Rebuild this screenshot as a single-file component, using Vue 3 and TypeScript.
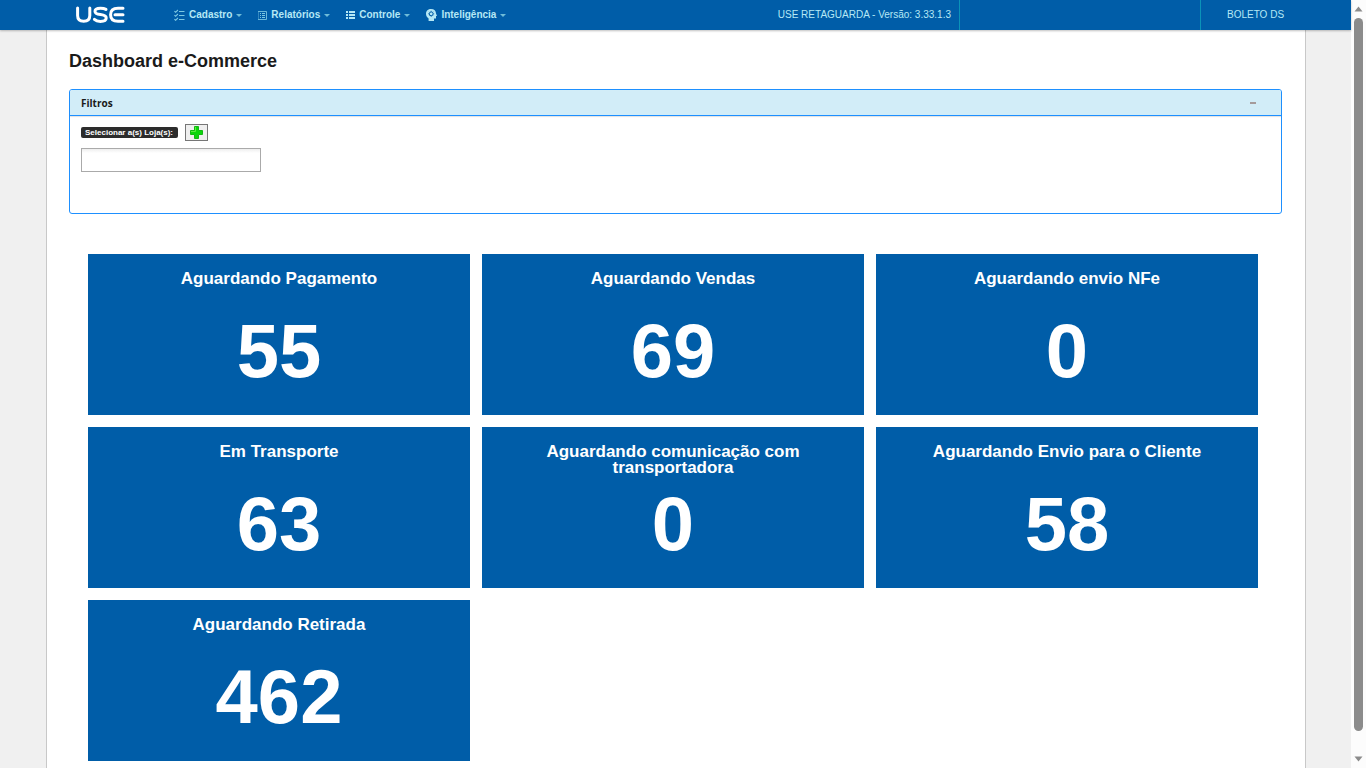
<script setup lang="ts">
import { ref } from 'vue'

interface MenuEntry {
  label: string
  icon: 'tasks' | 'report' | 'list' | 'mind'
}

interface StatusCard {
  title: string
  total: number
}

const menu: MenuEntry[] = [
  { label: 'Cadastro', icon: 'tasks' },
  { label: 'Relatórios', icon: 'report' },
  { label: 'Controle', icon: 'list' },
  { label: 'Inteligência', icon: 'mind' },
]

const cards: StatusCard[] = [
  { title: 'Aguardando Pagamento', total: 55 },
  { title: 'Aguardando Vendas', total: 69 },
  { title: 'Aguardando envio NFe', total: 0 },
  { title: 'Em Transporte', total: 63 },
  { title: 'Aguardando comunicação com transportadora', total: 0 },
  { title: 'Aguardando Envio para o Cliente', total: 58 },
  { title: 'Aguardando Retirada', total: 462 },
]

const store = ref('')
const open = ref(true)
</script>

<template>
  <div class="window">
    <div class="page">
      <header class="topbar">
        <a class="logo" href="#" aria-label="USE">
          <svg width="50" height="18" viewBox="0 0 50 18" fill="none" stroke="#fff" stroke-width="3" stroke-linecap="round">
            <path d="M1.6 2V9.5Q1.6 15.2 7.7 15.2Q13.8 15.2 13.8 9.5V2" />
            <path d="M30 3.4Q28 2.2 24.4 2.2Q19 2.2 19 5.2Q19 7.9 24.4 8.6Q30.2 9.3 30.2 12Q30.2 15.4 24.4 15.4Q20.4 15.4 18.4 13.4" />
            <path d="M47 2.2H42Q34.6 2.2 34.6 8.7Q34.6 15.2 42 15.2H47M39 8.7H47" />
          </svg>
        </a>
        <nav class="menu">
          <button v-for="entry in menu" :key="entry.label" type="button" class="menu-item" :class="entry.icon">
            <svg v-if="entry.icon === 'tasks'" class="icon" width="11" height="12" viewBox="0 0 11 12" fill="none" stroke="currentColor">
              <path d="M.4 2.2L1.6 3.3L3.9 1M.4 6.2L1.6 7.3L3.9 5M.4 10.2L1.6 11.3L3.9 9" stroke-width="1.1" />
              <path d="M5 2.5H10.5M5 6.5H10.5M5 10.5H10.5" />
            </svg>
            <svg v-else-if="entry.icon === 'report'" class="icon" width="9" height="9" viewBox="0 0 9 9" fill="none" stroke="currentColor">
              <path d="M.5 1V8" opacity=".4" />
              <path d="M0 .5H8.5V8.5H0" opacity=".85" />
              <path d="M2 2.5H3M4 2.5H7M2 4.5H3M4 4.5H7M2 6.5H3M4 6.5H7" />
            </svg>
            <svg v-else-if="entry.icon === 'list'" class="icon" width="9" height="8" viewBox="0 0 9 8" fill="currentColor">
              <path d="M0 0H2V2H0ZM3 0H9V2H3ZM0 3H2V5H0ZM3 3H9V5H3ZM0 6H2V8H0ZM3 6H9V8H3Z" />
            </svg>
            <svg v-else class="icon" width="11" height="12" viewBox="0 0 11 12">
              <path fill="currentColor" d="M5 0C8.2 0 10 2 10 4.6L11 7H10V9.5H8V12H2.6V9.5C1 8.4 0 6.8 0 4.8C0 2 2.2 0 5 0Z" />
              <circle cx="5.2" cy="4.8" r="1.9" fill="none" stroke="#005da8" stroke-width="1" />
              <path fill="none" stroke="#005da8" stroke-width=".8" d="M5.2 1.8V2.7M5.2 6.9V7.8M2.2 4.8H3.1M7.3 4.8H8.2M3.2 2.8L3.7 3.3M7.2 2.8L6.7 3.3M3.2 6.8L3.7 6.3M7.2 6.8L6.7 6.3" />
            </svg>
            <span>{{ entry.label }}</span>
            <svg class="caret" width="6" height="3" viewBox="0 0 6 3" fill="currentColor"><path d="M0 0H6L3 3Z" /></svg>
          </button>
        </nav>
        <div class="version">USE RETAGUARDA - Versão: 3.33.1.3</div>
        <div class="blank"></div>
        <div class="user">BOLETO DS</div>
      </header>

      <main class="content">
        <h1>Dashboard e-Commerce</h1>

        <section class="panel">
          <header class="panel-head">
            <h2>Filtros</h2>
            <button type="button" class="collapse" aria-label="Recolher filtros" @click="open = !open">
              <svg width="6" height="2" viewBox="0 0 6 2"><path d="M0 0H6V2H0Z" fill="#a59b9b" /></svg>
            </button>
          </header>
          <div v-if="open" class="panel-body">
            <div class="field-head">
              <label for="store">Selecionar a(s) Loja(s):</label>
              <button type="button" class="add" aria-label="Adicionar loja">
                <svg width="13" height="13" viewBox="0 0 13 13">
                  <path d="M4.5 .5H8.5V4.5H12.5V8.5H8.5V12.5H4.5V8.5H.5V4.5H4.5Z" fill="#0bd60b" stroke="#12b812" />
                  <path d="M5.5 1V5.5H1" fill="none" stroke="#5cf03c" />
                </svg>
              </button>
            </div>
            <input id="store" v-model="store" type="text" />
          </div>
        </section>

        <section class="cards">
          <article v-for="card in cards" :key="card.title" class="card">
            <h3>{{ card.title }}</h3>
            <strong>{{ card.total }}</strong>
          </article>
        </section>
      </main>
    </div>

    <div class="scrollbar" aria-hidden="true">
      <svg width="9" height="6" viewBox="0 0 9 6"><path d="M4.5 .5L8.5 5.5H.5Z" fill="#8b8b8b" /></svg>
      <div class="track"><div class="thumb"></div></div>
      <svg width="9" height="6" viewBox="0 0 9 6"><path d="M4.5 5.5L8.5 .5H.5Z" fill="#8b8b8b" /></svg>
    </div>
  </div>
</template>

<style>
body {
  margin: 0;
}
</style>

<style scoped>
* {
  box-sizing: border-box;
}

.window {
  display: flex;
  height: 100vh;
  overflow: hidden;
  background: #f0f0f0;
  color: #1a1a1a;
  font-family: "Liberation Sans", Arial, sans-serif;
}

.page {
  flex: 1;
  min-width: 0;
  display: flex;
  flex-direction: column;
}

button {
  padding: 0;
  border: 0;
  background: none;
  font-family: inherit;
  cursor: pointer;
}

.topbar {
  flex: none;
  display: flex;
  align-items: center;
  height: 30px;
  padding-left: 76px;
  background: #005da8;
  color: #b5e8f5;
  font-size: 10px;
  line-height: 12px;
  box-shadow: 0 1px 2px rgba(0, 0, 0, 0.25);
  position: relative;
}

.logo {
  display: flex;
  width: 98px;
}

.menu {
  display: flex;
  flex: 1;
  gap: 16px;
}

.menu-item {
  display: flex;
  align-items: center;
  gap: 4px;
  color: #b5e8f5;
  font-size: 10px;
  font-weight: bold;
  line-height: 12px;
}

.tasks .icon,
.report .icon {
  color: #7cc8e2;
}

.caret {
  color: #6fbcd8;
}

.version {
  padding-right: 8px;
}

.blank {
  width: 242px;
  height: 30px;
  border: solid #0b93b8;
  border-width: 0 1px;
}

.user {
  width: 150px;
  padding-left: 26px;
}

.content {
  flex: 1;
  margin: 0 45px 0 46px;
  padding: 21px 23px 0 22px;
  border: solid #c8c8c8;
  border-width: 0 1px;
  background: #fff;
}

h1 {
  margin: 0 0 17px;
  font-size: 18px;
  line-height: 21px;
}

.panel {
  min-height: 125px;
  border: 1px solid #1e90ff;
  border-radius: 3px;
}

.panel-head {
  display: flex;
  align-items: center;
  justify-content: space-between;
  height: 26px;
  padding: 0 25px 0 11px;
  border-bottom: 1px solid #1e90ff;
  border-radius: 2px 2px 0 0;
  background: #d2edf8;
  box-shadow: 0 1px 1px rgba(0, 0, 0, 0.12);
}

h2 {
  margin: 0;
  font-family: "Open Sans", sans-serif;
  font-size: 10px;
  line-height: 12px;
}

.collapse {
  display: flex;
}

.panel-body {
  padding: 8px 11px;
}

.field-head {
  display: flex;
  align-items: center;
  gap: 7px;
  margin-bottom: 7px;
}

label {
  padding: 0 5px 0 4px;
  border-radius: 2px;
  background: #2c2c2c;
  color: #fff;
  font-size: 8px;
  font-weight: bold;
  line-height: 11px;
}

.add {
  display: flex;
  align-items: center;
  justify-content: center;
  width: 23px;
  height: 17px;
  border: 1px solid #767676;
  background: #efefef;
}

input {
  display: block;
  width: 180px;
  height: 24px;
  padding: 0 4px;
  border: 1px solid #aaa;
  background: linear-gradient(#eee 0, #fff 4px);
  font-size: 12px;
}

.cards {
  display: grid;
  grid-template-columns: repeat(3, 1fr);
  gap: 12px;
  margin: 40px 24px 0 19px;
}

.card {
  display: flex;
  flex-direction: column;
  align-items: center;
  padding: 17px 48px 26px;
  background: #005da8;
  color: #fff;
  text-align: center;
}

h3 {
  min-height: 32px;
  margin: 0 0 9px;
  font-size: 17px;
  line-height: 16px;
}

strong {
  font-size: 76px;
  line-height: 77px;
}

.scrollbar {
  flex: none;
  display: flex;
  flex-direction: column;
  align-items: center;
  width: 15px;
  padding: 6px 0;
  background: #fcfcfc;
}

.track {
  flex: 1;
  width: 9px;
  padding: 6px 0 25px;
}

.thumb {
  height: 100%;
  border-radius: 5px;
  background: #8b8b8b;
}
</style>
